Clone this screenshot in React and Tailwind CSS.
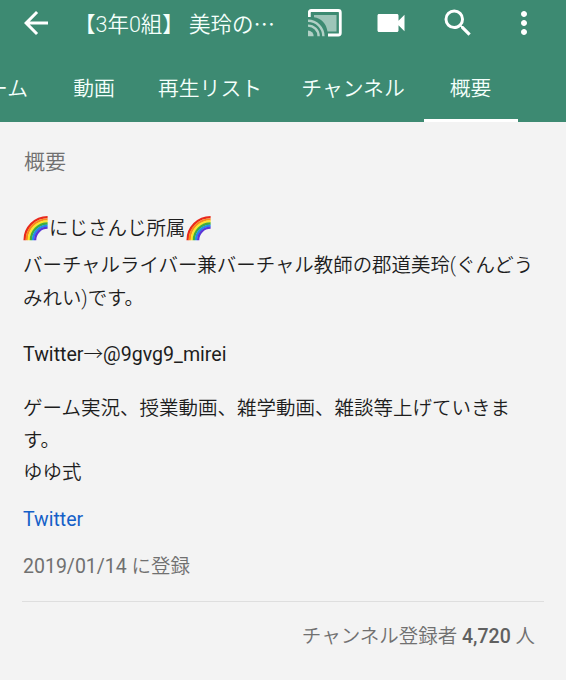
import { MdArrowBack, MdSearch, MdVideocam, MdMoreVert } from 'react-icons/md';

const tabs = [
  { label: 'ホーム', className: 'w-[50px] -ml-[22px] justify-end' },
  { label: '動画', className: 'w-[88px] justify-center ml-[22px]' },
  { label: '再生リスト', className: 'w-[144px] justify-center' },
  { label: 'チャンネル', className: 'w-[142px] justify-center' },
  { label: '概要', className: 'w-[94px] justify-center pr-px', active: true },
];

const rainbowBands = ['#e8291c', '#f98a1d', '#fbe62d', '#3fae3c', '#1f8fe8', '#5a35d8'];

const Rainbow = () => (
  <svg viewBox="0 0 25 25" className="w-[25px] h-[25px] shrink-0">
    {rainbowBands.map((color, i) => {
      const r = 23 - i * 2.1;
      return (
        <path
          key={color}
          d={`M${24.6 - r} 24.2A${r} ${r} 0 0 1 24.6 ${24.2 - r}`}
          fill="none"
          stroke={color}
          strokeWidth="2.3"
        />
      );
    })}
  </svg>
);

const CastIcon = () => (
  <svg viewBox="0 0 34 28" className="w-[34px] h-[28px]" fill="none">
    <path d="M6 6H28.5V22.5H19.5C18.5 14.5 13 9 6 8.2Z" fill="#fff" fillOpacity=".5" />
    <path d="M1.3 8V3.5Q1.3 1.5 3.3 1.5H30.3Q32.3 1.5 32.3 3.5V24Q32.3 26 30.3 26H20" stroke="#fff" strokeWidth="2.8" />
    <g stroke="#fff" strokeOpacity=".6" strokeWidth="2.4">
      <path d="M0 11.8A15.4 15.4 0 0 1 15.4 27.2" />
      <path d="M0 16.6A10.6 10.6 0 0 1 10.6 27.2" />
    </g>
    <path d="M0 21.5A5.7 5.7 0 0 1 5.7 27.2H0Z" fill="#fff" fillOpacity=".6" />
  </svg>
);

const Header = () => (
  <header className="h-[122px] bg-[#3d8a72] text-[#f4fffb] overflow-hidden">
    <div className="flex items-center h-[46px] pl-5">
      <MdArrowBack className="w-9 h-9 shrink-0 -ml-[2px] text-white" />
      <h1 className="ml-[20px] pt-[3px] w-[212px] text-[21.5px] font-[350] whitespace-nowrap">
        【3年0組】 美玲の<span className="font-['Noto_Sans_CJK_JP',sans-serif]">…</span>
      </h1>
      <div className="flex items-center ml-[22px] text-white">
        <CastIcon />
        <MdVideocam className="w-[36px] h-[36px] ml-[31px]" />
        <MdSearch className="w-[36px] h-[36px] ml-[31px]" />
        <MdMoreVert className="w-[36px] h-[36px] ml-[30px]" />
      </div>
    </div>

    <nav className="flex h-[76px] text-[20.8px] font-[350] whitespace-nowrap">
      {tabs.map(tab => (
        <div
          key={tab.label}
          className={`flex items-center shrink-0 pt-[15px] border-b-[3px] ${tab.active ? 'border-white' : 'border-transparent'} ${tab.className}`}
        >
          {tab.label}
        </div>
      ))}
    </nav>
  </header>
);

const App = () => {
  return (
    <div className="h-[680px] bg-[#f3f3f3] text-[#1d1d1d] font-['Roboto','Noto_Sans_CJK_JP',sans-serif] overflow-hidden" lang="ja">
      <Header />

      <main className="px-[23px] text-[19.5px] font-[350] leading-[32px] whitespace-nowrap">
        <h2 className="pt-[24px] pl-px text-[21px] text-[#707070]">概要</h2>

        <div className="mt-[33px] flex items-center">
          <Rainbow />
          <span className="ml-px pt-[2px]">にじさんじ所属</span>
          <Rainbow />
        </div>
        <p className="mt-[4px] text-[19.45px] leading-[33px]">
          バーチャルライバー兼バーチャル教師の郡道美玲(ぐんどう
          <br />
          みれい)です。
        </p>

        <p className="mt-[24px] text-[19.6px] font-normal">
          Twitter<span className="font-light">→</span>@9gvg9_mirei
        </p>

        <p className="mt-[22px]">
          ゲーム実況、授業動画、雑学動画、雑談等上げていきま
          <br />
          す。
          <br />
          ゆゆ式
        </p>

        <a className="block mt-[15px] font-normal text-[#1560c8]">Twitter</a>
        <p className="mt-[15px] text-[#707070]">
          <span className="font-normal">2019/01/14</span> に登録
        </p>
      </main>

      {/* Subscriber count */}
      <footer className="mx-[22px] mt-[18px] pt-[19px] pr-[9px] border-t border-[#dedede] text-right text-[19.5px] leading-[32px] font-[350] text-[#707070]">
        チャンネル登録者 <b className="font-medium text-[#606060]">4,720</b> 人
      </footer>
    </div>
  );
};

export default App;
